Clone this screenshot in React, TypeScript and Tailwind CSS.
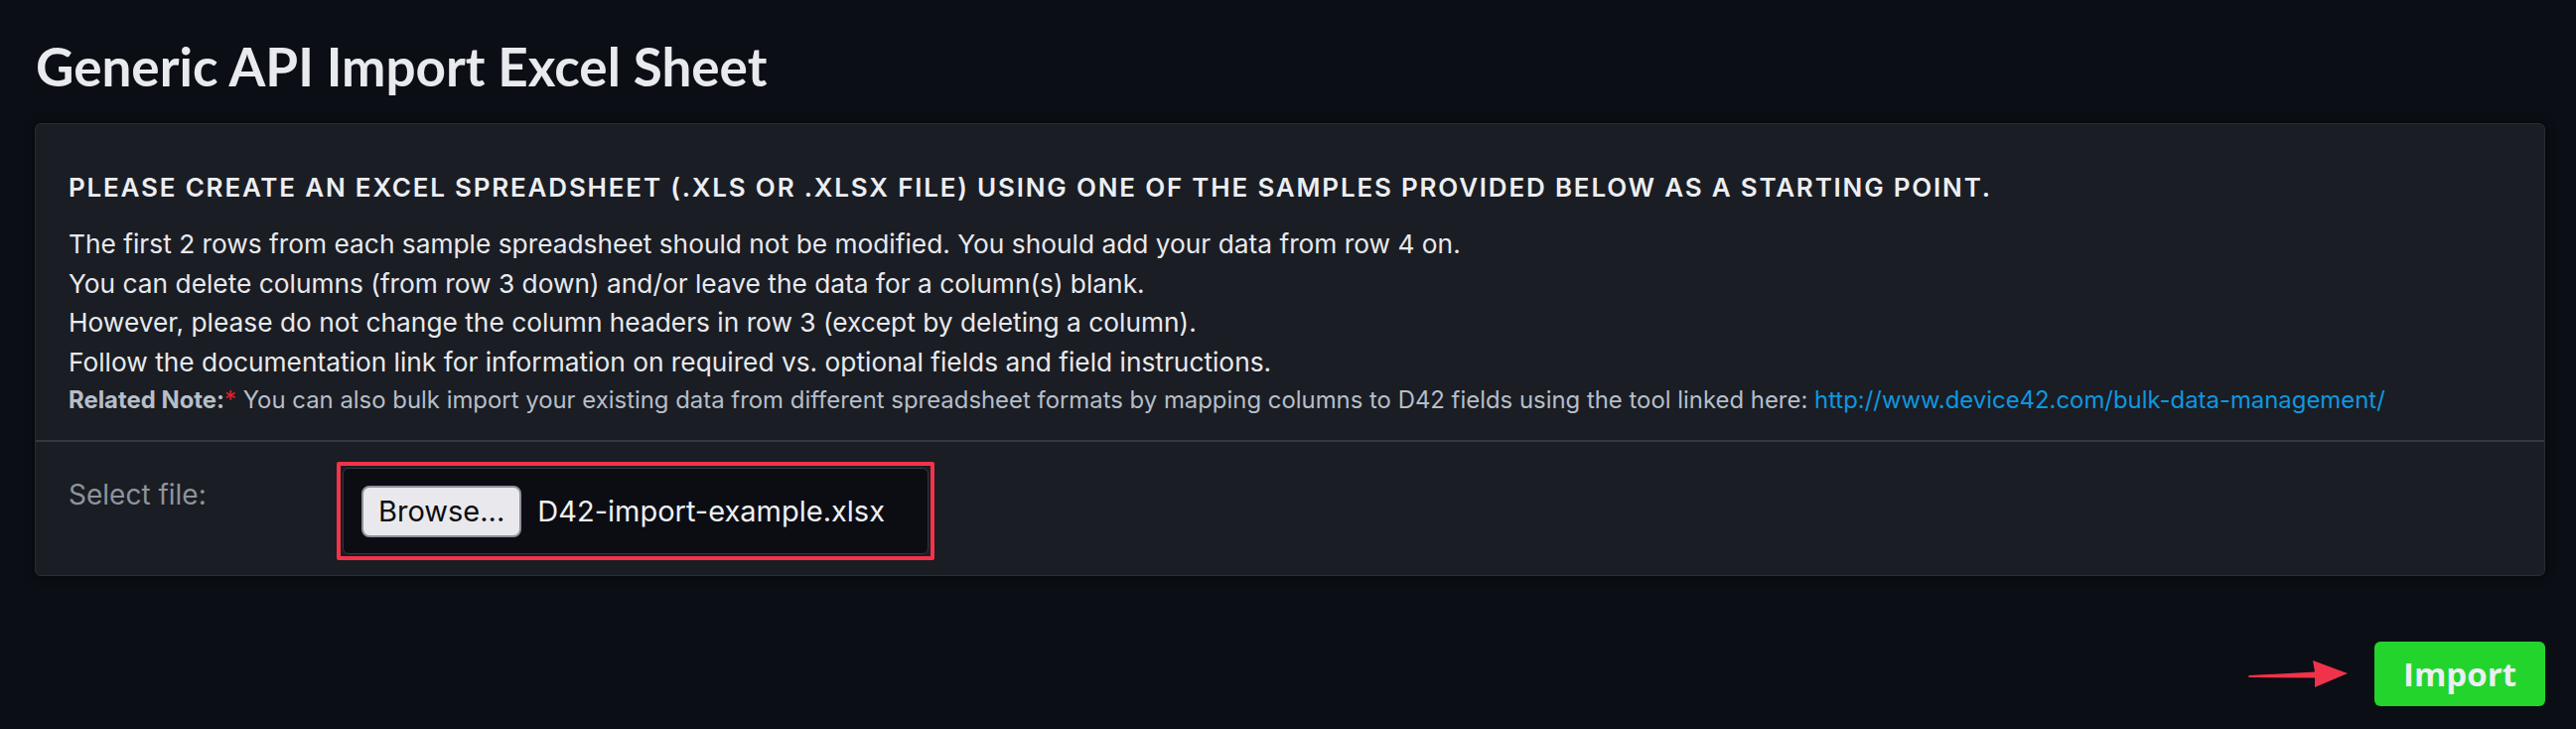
import React from "react";

export default function App() {
  return (
    <div className="w-[2594px] h-[734px] bg-[#0b0e15] overflow-hidden" style={{ fontFamily: "Inter, 'Noto Sans', sans-serif" }}>
      <div className="pl-[36px] pt-[31px]">
        <h1 className="text-[53px] leading-[72px] font-bold text-[#e9eaee]" style={{ fontFamily: "Lato, sans-serif" }}>
          Generic API Import Excel Sheet
        </h1>
      </div>
      <div className="ml-[35px] mt-[21px] w-[2528px] rounded-[6px] border border-[#2a2d33] bg-[#1a1d23] shadow-[0_0_10px_rgba(0,0,0,0.6)]">
        <div className="px-[33px] pt-[44px] pb-[21px]">
          <div className="text-[26px] leading-[40px] font-semibold tracking-[1.8px] text-[#eceef2]">
            PLEASE CREATE AN EXCEL SPREADSHEET (.XLS OR .XLSX FILE) USING ONE OF THE SAMPLES PROVIDED BELOW AS A STARTING POINT.
          </div>
          <div className="mt-[17px] text-[26.3px] leading-[39.5px] text-[#e8e9ee]">
            <p>The first 2 rows from each sample spreadsheet should not be modified. You should add your data from row 4 on.</p>
            <p>You can delete columns (from row 3 down) and/or leave the data for a column(s) blank.</p>
            <p>However, please do not change the column headers in row 3 (except by deleting a column).</p>
            <p>Follow the documentation link for information on required vs. optional fields and field instructions.</p>
          </div>
          <div className="text-[23.9px] leading-[38px] text-[#b6bec9]">
            <span className="font-bold">Related Note:</span>
            <span className="text-[#e0212e]">*</span> You can also bulk import your existing data from different spreadsheet formats by mapping columns to D42 fields using the tool linked here:{" "}
            <a className="text-[#0e97e0]">http://www.device42.com/bulk-data-management/</a>
          </div>
        </div>
        <div className="h-[2px] bg-[#35383e]" />
        <div className="flex items-start px-[33px] pt-[20px] pb-[15px]">
          <div className="w-[270px] pt-[13px] text-[28px] leading-[40px] text-[#8c949e]">Select file:</div>
          <div className="rounded-[2px] border-[4px] border-[#f2334a] p-[2px]">
            <div className="flex h-[87px] w-[590px] items-center rounded-[6px] border border-[#34363c] bg-[#0b0d13] pl-[18px]">
              <div className="flex h-[52px] items-center rounded-[8px] border-2 border-[#8f8f9d] bg-[#e9e9ed] px-[15px] text-[29px] text-[#0b0b0f]">
                Browse...
              </div>
              <span className="ml-[16px] text-[29px] text-[#eef0f3]">D42-import-example.xlsx</span>
            </div>
          </div>
        </div>
      </div>
      <div className="mt-[66px] flex items-center justify-end pr-[31px]">
        <svg width="104" height="34" viewBox="0 0 104 34" className="mr-[24px]">
          <path d="M2 18 L68 14.5 L66 3 L101 16 L68 30 L68 20.5 L2 20 Q0 19 2 18 Z" fill="#f0334a" />
        </svg>
        <button className="h-[65px] w-[172px] rounded-[6px] bg-[#22d42b] text-[33px] font-bold text-[#eceef2]" style={{ fontFamily: "'Open Sans', sans-serif" }}>
          Import
        </button>
      </div>
    </div>
  );
}
